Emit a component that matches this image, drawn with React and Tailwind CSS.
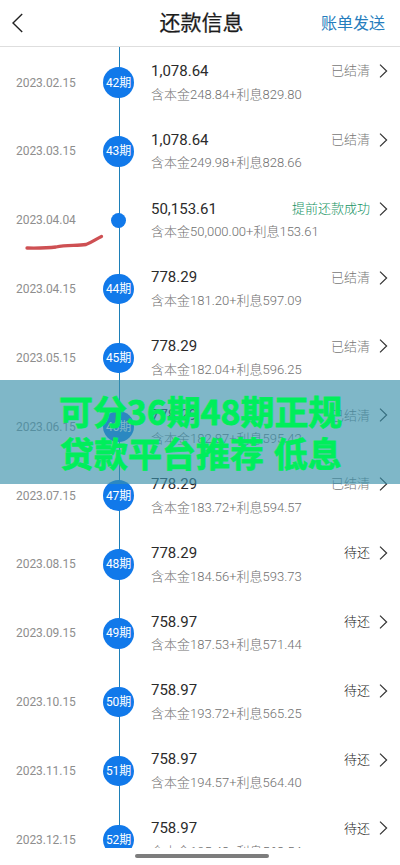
const rows = [
  { date: '2023.02.15', term: '42期', amount: '1,078.64', detail: '含本金248.84+利息829.80', state: 'done' },
  { date: '2023.03.15', term: '43期', amount: '1,078.64', detail: '含本金249.98+利息828.66', state: 'done' },
  { date: '2023.04.04', term: null, amount: '50,153.61', detail: '含本金50,000.00+利息153.61', state: 'early' },
  { date: '2023.04.15', term: '44期', amount: '778.29', detail: '含本金181.20+利息597.09', state: 'done' },
  { date: '2023.05.15', term: '45期', amount: '778.29', detail: '含本金182.04+利息596.25', state: 'done' },
  { date: '2023.06.15', term: '46期', amount: '778.29', detail: '含本金182.87+利息595.42', state: 'done' },
  { date: '2023.07.15', term: '47期', amount: '778.29', detail: '含本金183.72+利息594.57', state: 'done' },
  { date: '2023.08.15', term: '48期', amount: '778.29', detail: '含本金184.56+利息593.73', state: 'due' },
  { date: '2023.09.15', term: '49期', amount: '758.97', detail: '含本金187.53+利息571.44', state: 'due' },
  { date: '2023.10.15', term: '50期', amount: '758.97', detail: '含本金193.72+利息565.25', state: 'due' },
  { date: '2023.11.15', term: '51期', amount: '758.97', detail: '含本金194.57+利息564.40', state: 'due' },
  { date: '2023.12.15', term: '52期', amount: '758.97', detail: '含本金195.43+利息563.54', state: 'due' },
];

const states = {
  done: { label: '已结清', color: 'text-[#777777]' },
  early: { label: '提前还款成功', color: 'text-[#159363]' },
  due: { label: '待还', color: 'text-[#1c1c1c]' },
};

function Row({ row }) {
  const state = states[row.state];
  return (
    <li className="flex h-[68.85px] shrink-0">
      <div className="flex w-[103px] items-center pl-4 text-[12px] tracking-[-0.05px] text-[#8e8e8e]">{row.date}</div>
      <div className="relative flex w-[31px] items-center justify-center">
        <span className="absolute inset-y-0 left-4 w-px bg-[#1d7fb8]" />
        {row.term ? (
          <span className="relative flex size-[30.5px] items-center justify-center rounded-full bg-[#1179ea] text-[12px] tracking-[-0.2px] whitespace-nowrap text-white">
            {row.term}
          </span>
        ) : (
          <span className="relative size-[15px] rounded-full bg-[#1179ea]" />
        )}
      </div>
      <div className="flex-1 pt-[13px] pr-3 pl-[17px]">
        <div className="flex h-5 items-center">
          <span className="flex-1 text-[15px] text-[#2b2b2b]">{row.amount}</span>
          <span className={`text-[13px] font-light ${state.color}`}>{state.label}</span>
          <svg className="ml-[9px] h-[14px] w-[9px]" viewBox="0 0 9 14" fill="none" stroke="#333" strokeWidth="1.2">
            <path d="M1 .6 7.6 7 1 13.4" />
          </svg>
        </div>
        <div className="mt-[3.5px] h-5 text-[13px] leading-5 font-light whitespace-nowrap text-[#6f6f6f]">{row.detail}</div>
      </div>
    </li>
  );
}

export default function App() {
  return (
    <div className="relative flex h-[865px] w-[400px] flex-col overflow-hidden bg-white font-[Roboto,'Noto_Sans_CJK_SC',sans-serif]">
      <header className="grid h-[47px] shrink-0 grid-cols-[1fr_auto_1fr] items-center border-b border-[#dedede] pr-[15px] pl-[12px]">
        <svg className="h-5 w-3" viewBox="0 0 12 20" fill="none" stroke="#222" strokeWidth="1.4">
          <path d="M10.2 1 1 10l9.2 9" />
        </svg>
        <h1 className="pt-px pl-[6px] text-[21px] leading-none text-[#1c1c1c] [-webkit-text-stroke:0.25px_#1c1c1c]">还款信息</h1>
        <button className="justify-self-end pt-px text-[16px] leading-none text-[#267dbd]">账单发送</button>
      </header>

      <div className="relative h-[800.5px] shrink-0 overflow-hidden">
        <span className="absolute top-0 left-[119px] h-2 w-px bg-[#1d7fb8]" />
        <ul className="flex flex-col pt-[1.1px]">
          {rows.map((row) => (
            <Row key={row.date} row={row} />
          ))}
        </ul>
      </div>

      <footer className="flex flex-1 justify-center pt-[6.5px] pl-[4px]">
        <div className="h-1 w-[134px] rounded-full bg-[#7d7d7d]" />
      </footer>

      <svg className="absolute top-[230px] left-5 h-[24px] w-[88px]" viewBox="0 0 88 24" fill="none" stroke="#ce5053" strokeWidth="3.3" strokeLinecap="round" strokeLinejoin="round">
        <path d="M7 18C19 18.2 28 18 36 17C47 14.800 57 16 66 14.500C72 12.500 76 9 81.500 6.500" />
      </svg>

      <div className="absolute top-[380px] left-0 h-[104px] w-full bg-[#3a90aa]/65 pt-[10px] pl-[59px] font-['Noto_Sans_CJK_SC',sans-serif] text-[34px] leading-[42px] font-bold whitespace-nowrap text-[#00ee5b] [-webkit-text-stroke:0.8px_#00ee5b]">
        <p className="tracking-[-0.1px]">可分36期48期正规</p>
        <p className="pl-px [word-spacing:2px]">贷款平台推荐 低息</p>
      </div>
    </div>
  );
}
